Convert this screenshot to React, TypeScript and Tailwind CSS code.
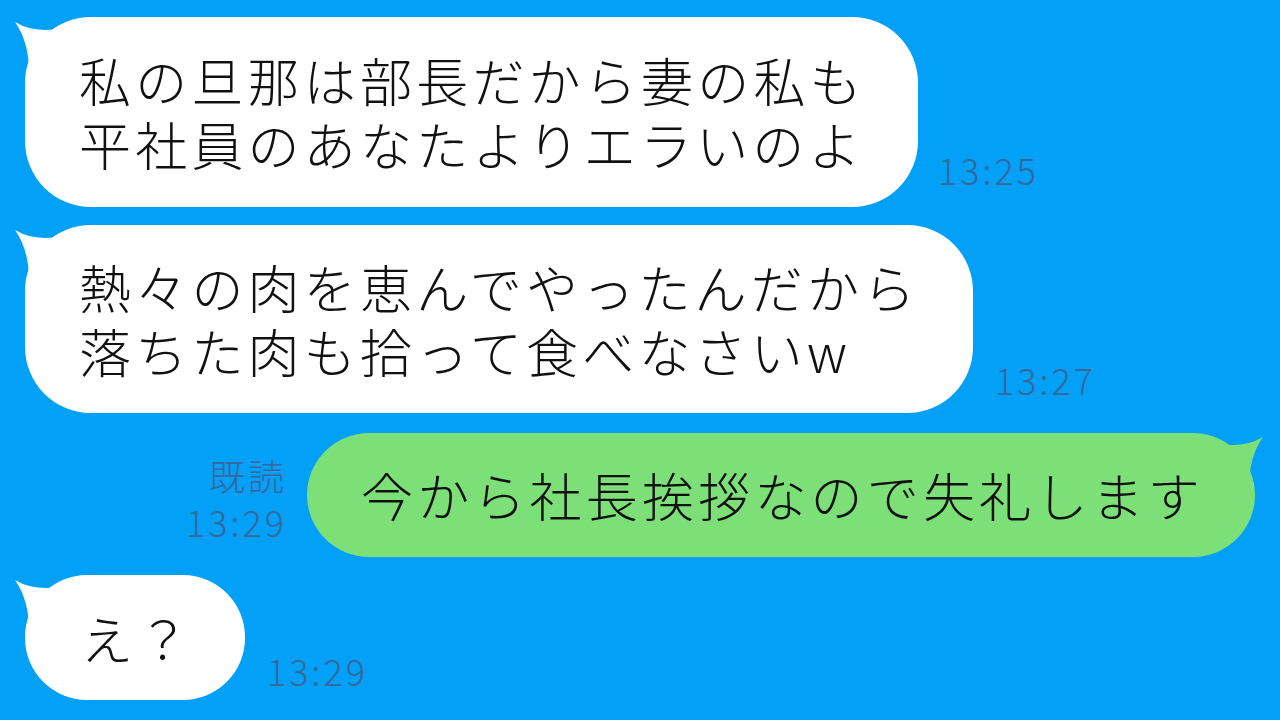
import React from "react";

const jp = { fontFamily: '"Noto Sans CJK JP", "Noto Sans", sans-serif' };

function TailLeft({ color }: { color: string }) {
  return (
    <svg className="absolute -left-[12px] top-[3px]" width="60" height="60" viewBox="0 0 60 60">
      <path d="M2 2 Q 22 14 52 8 L 52 52 L 16 52 Q 16 22 2 2 Z" fill={color} />
    </svg>
  );
}

function TailRight({ color }: { color: string }) {
  return (
    <svg className="absolute -right-[10px] top-[2px]" width="60" height="60" viewBox="0 0 60 60">
      <path d="M58 2 Q 38 14 8 8 L 8 52 L 44 52 Q 44 22 58 2 Z" fill={color} />
    </svg>
  );
}

function Time({ children, className = "" }: { children: React.ReactNode; className?: string }) {
  return (
    <span className={`text-[36px] font-light leading-none tracking-[3px] text-[#35679a] ${className}`} style={jp}>
      {children}
    </span>
  );
}

const msg = "relative text-[52px] font-light leading-[64px] tracking-[4.2px] text-[#111]";

export default function App() {
  return (
    <div className="h-[720px] w-[1280px] overflow-hidden bg-[#02a0f7]" style={jp}>
      <div className="flex flex-col gap-[18px] pt-[17px]">
        <div className="flex items-end pl-[25px]">
          <div className="relative flex h-[190px] w-[893px] flex-col justify-center rounded-[66px] bg-white pl-[54px]">
            <TailLeft color="#ffffff" />
            <p className={msg}>
              私の旦那は部長だから妻の私も
              <br />
              平社員のあなたよりエラいのよ
            </p>
          </div>
          <Time className="mb-[20px] ml-[20px]">13:25</Time>
        </div>

        <div className="flex items-end pl-[25px]">
          <div className="relative flex h-[188px] w-[948px] flex-col justify-center rounded-[66px] bg-white pl-[54px]">
            <TailLeft color="#ffffff" />
            <p className={msg}>
              熱々の肉を恵んでやったんだから
              <br />
              落ちた肉も拾って食べなさいw
            </p>
          </div>
          <Time className="mb-[16px] ml-[22px]">13:27</Time>
        </div>

        <div className="mt-[2px] flex items-end justify-end pr-[25px]">
          <div className="mb-[18px] mr-[20px] flex flex-col items-end gap-[10px]">
            <Time className="text-[32px]">既読</Time>
            <Time>13:29</Time>
          </div>
          <div className="relative flex h-[124px] w-[948px] items-center rounded-[62px] bg-[#7ddf78] pl-[54px]">
            <TailRight color="#7ddf78" />
            <p className={msg}>今から社長挨拶なので失礼します</p>
          </div>
        </div>

        <div className="flex items-end pl-[25px]">
          <div className="relative flex h-[125px] w-[220px] items-center rounded-[62px] bg-white pl-[56px]">
            <TailLeft color="#ffffff" />
            <p className={msg}>え？</p>
          </div>
          <Time className="mb-[12px] ml-[22px]">13:29</Time>
        </div>
      </div>
    </div>
  );
}
